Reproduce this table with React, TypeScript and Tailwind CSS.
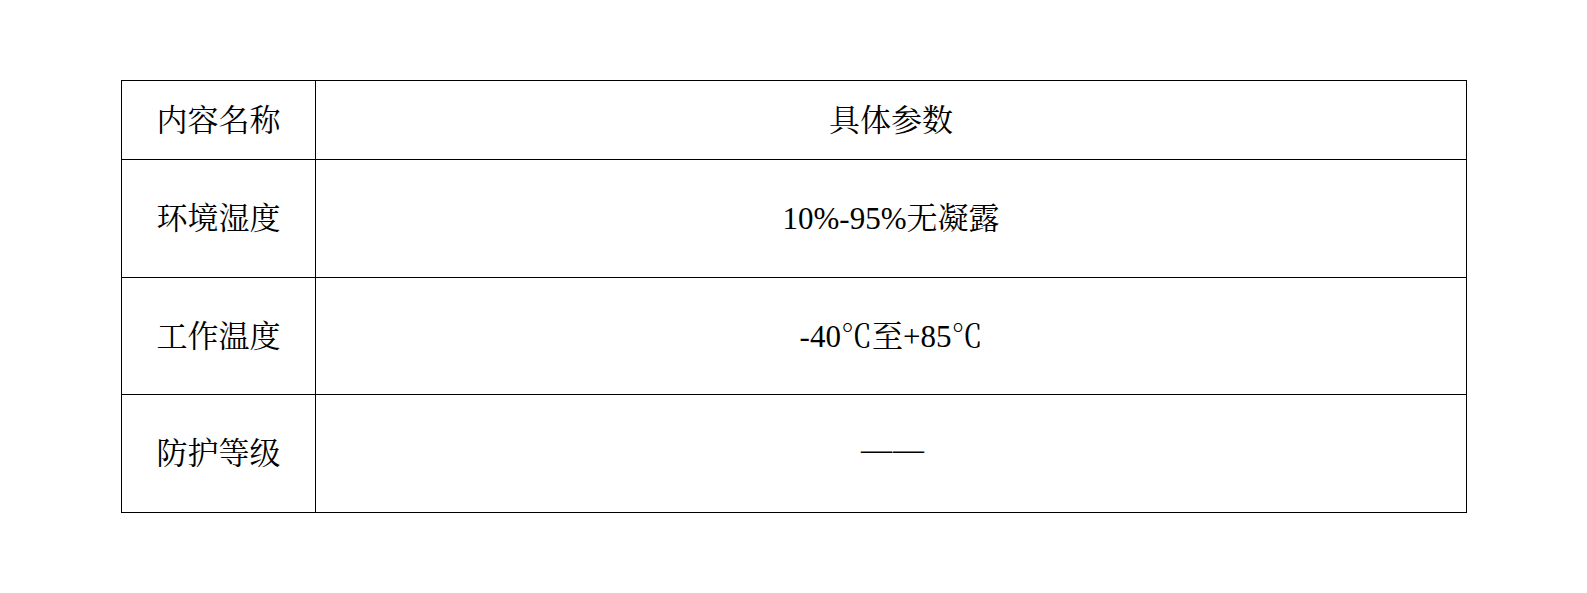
import React from "react";

const rows: { name: string; value: React.ReactNode; h: string }[] = [
  { name: "内容名称", value: "具体参数", h: "h-[78px]" },
  { name: "环境湿度", value: "10%-95%无凝露", h: "h-[117px]" },
  { name: "工作温度", value: "-40℃至+85℃", h: "h-[116px]" },
  {
    name: "防护等级",
    value: (
      <span className="inline-block tracking-[1px] translate-x-[2px] -translate-y-[4px] [font-family:'Liberation_Serif',serif]">——</span>
    ),
    h: "h-[117px]",
  },
];

export default function App() {
  return (
    <div className="w-[1587px] h-[593px] bg-white pt-[80px] pl-[121px] [font-family:'Liberation_Serif','Noto_Serif_CJK_SC','Noto_Sans_CJK_SC',serif] text-black">
      <div className="w-[1346px] border border-black bg-black grid grid-cols-[193px_1150px] gap-px">
        {rows.map((r) => (
          <React.Fragment key={r.name}>
            <div className={`${r.h} bg-white flex items-center justify-center text-[31px] leading-none`}>
              {r.name}
            </div>
            <div className={`${r.h} bg-white flex items-center justify-center text-[31px] leading-none`}>
              {r.value}
            </div>
          </React.Fragment>
        ))}
      </div>
    </div>
  );
}
